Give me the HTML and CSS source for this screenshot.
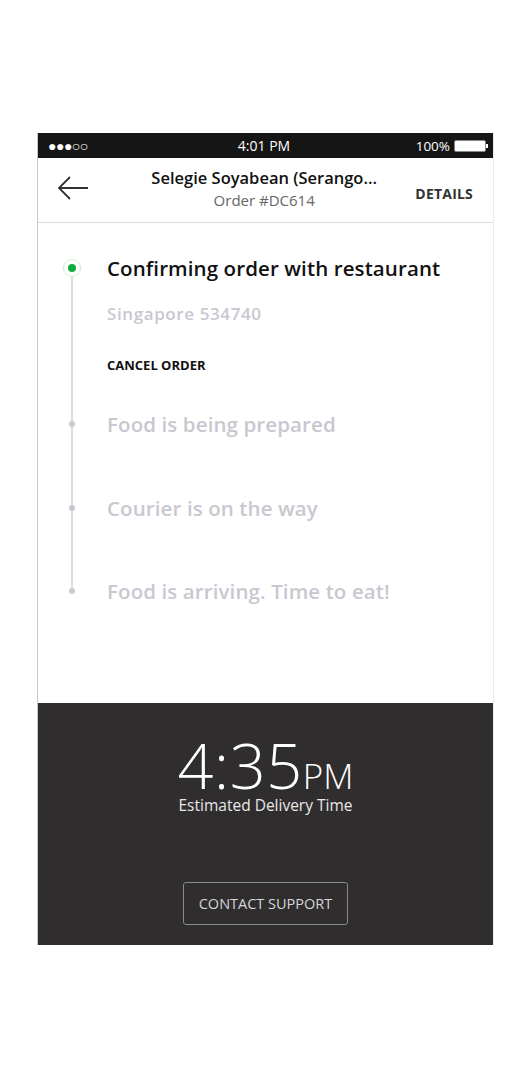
FILE: index.html
```html
<!DOCTYPE html>
<html lang="en">
<head>
  <meta charset="UTF-8" />
  <meta name="viewport" content="width=device-width, initial-scale=1.0"/>
  <title>Order Status</title>
  <link rel="stylesheet" href="styles.css">
</head>
<body>
  <div class="phone">
    <div class="status-bar">
      <span class="signal">●●●○○</span>
      <span class="clock">4:01 PM</span>
      <span class="battery">100%
        <svg width="36" height="12" viewBox="0 0 36 12">
          <rect x="0.5" y="0.5" width="31" height="11" rx="1.5" fill="#fff" stroke="#888"/>
          <rect x="32" y="4" width="2" height="4" fill="#fff"/>
        </svg>
      </span>
    </div>

    <div class="header">
      <svg class="back" width="32" height="26" viewBox="0 0 32 26">
        <path d="M31 13H2M13 2L2 13l11 11" fill="none" stroke="#333" stroke-width="1.8"/>
      </svg>
      <div class="title">
        <div class="name">Selegie Soyabean (Serango...</div>
        <div class="order">Order #DC614</div>
      </div>
      <div class="details">DETAILS</div>
    </div>

    <div class="timeline">
      <div class="step active">
        <span class="dot"></span>
        <div class="step-body">
          <div class="step-title">Confirming order with restaurant</div>
          <div class="address">Singapore 534740</div>
          <div class="cancel">CANCEL ORDER</div>
        </div>
      </div>
      <div class="step">
        <span class="dot"></span>
        <div class="step-title">Food is being prepared</div>
      </div>
      <div class="step">
        <span class="dot"></span>
        <div class="step-title">Courier is on the way</div>
      </div>
      <div class="step last">
        <span class="dot"></span>
        <div class="step-title">Food is arriving. Time to eat!</div>
      </div>
    </div>

    <div class="eta">
      <div class="time">4:35<span class="ampm">PM</span></div>
      <div class="eta-label">Estimated Delivery Time</div>
      <button class="support">CONTACT SUPPORT</button>
    </div>
  </div>
</body>
</html>
```

FILE: styles.css
```css
body {
    margin: 0;
    padding: 0;
    background-color: #fff;
    font-family: 'Open Sans', 'Noto Sans', sans-serif;
}
.phone {
    width: 457px;
    margin: 133px 0 0 37px;
    border-left: 1px solid #c8c8c8;
    border-right: 1px solid #ececec;
    box-sizing: border-box;
    display: flex;
    flex-direction: column;
}
.status-bar {
    height: 25px;
    background-color: #151515;
    color: #fff;
    display: flex;
    align-items: center;
    justify-content: space-between;
    padding: 0 3px 0 10px;
    font-size: 13px;
}
.signal {
    font-size: 14px;
    letter-spacing: -0.5px;
    width: 90px;
}
.clock {
    font-size: 14px;
    margin-right: 10px;
}
.battery {
    width: 90px;
    display: flex;
    align-items: center;
    justify-content: flex-end;
    gap: 4px;
    font-size: 13.5px;
}
.header {
    height: 64px;
    border-bottom: 1px solid #dcdcdc;
    display: flex;
    align-items: center;
    padding: 0 20px 0 19px;
}
.back {
    flex: none;
    margin-top: -4px;
}
.title {
    flex: 1;
    text-align: center;
    padding-left: 24px;
    margin-top: -2px;
}
.name {
    font-weight: 600;
    font-size: 16.5px;
    color: #111;
    line-height: 22px;
}
.order {
    font-size: 15px;
    color: #666;
    line-height: 22px;
}
.details {
    font-size: 14px;
    font-weight: 700;
    color: #333;
    letter-spacing: 0.2px;
    margin-top: 6px;
}
.timeline {
    height: 480px;
    padding: 33px 0 0 26px;
    box-sizing: border-box;
    display: flex;
    flex-direction: column;
}
.step {
    display: flex;
    align-items: flex-start;
    position: relative;
    min-height: 83.5px;
}
.step::before {
    content: "";
    position: absolute;
    left: 7px;
    top: 8px;
    bottom: -10px;
    width: 2px;
    background-color: #dcdce2;
}
.step.last::before {
    display: none;
}
.step.active {
    min-height: 156px;
}
.dot {
    flex: none;
    width: 6px;
    height: 6px;
    margin: 9px 0 0 5px;
    border-radius: 50%;
    background-color: #c8c8d0;
    position: relative;
    z-index: 1;
}
.active .dot {
    width: 8px;
    height: 8px;
    margin: 4px 0 0 0;
    border: 4px solid #fff;
    box-shadow: 0 0 0 1px #cdeecd;
    background-color: #0fae3c;
}
.step-title {
    margin-left: 32px;
    font-size: 20.5px;
    line-height: 24px;
    color: #c8c8d0;
    font-weight: 600;
    letter-spacing: 0.1px;
}
.active .step-title {
    margin-left: 0;
    color: #111;
}
.step-body {
    margin-left: 27px;
}
.address {
    font-size: 17px;
    color: #c8c8d0;
    font-weight: 600;
    letter-spacing: 0.6px;
    margin-top: 22px;
}
.cancel {
    font-size: 13px;
    font-weight: 700;
    color: #111;
    margin-top: 31px;
}
.eta {
    height: 242px;
    background-color: #2f2d2e;
    color: #fff;
    display: flex;
    flex-direction: column;
    align-items: center;
    padding-top: 36px;
    box-sizing: border-box;
}
.time {
    font-family: 'Open Sans', sans-serif;
    font-weight: 300;
    font-size: 63px;
    line-height: 52px;
    letter-spacing: 0.6px;
}
.ampm {
    font-size: 35px;
    letter-spacing: 0;
}
.eta-label {
    font-size: 15.5px;
    line-height: 21px;
    color: #e8e8e8;
    margin-top: -7px;
}
.support {
    margin-top: 66px;
    width: 165px;
    height: 43px;
    background-color: transparent;
    border: 1px solid #8a8a8a;
    border-radius: 3px;
    color: #d6d6d6;
    font-family: 'Open Sans', sans-serif;
    font-size: 14.5px;
}
```
